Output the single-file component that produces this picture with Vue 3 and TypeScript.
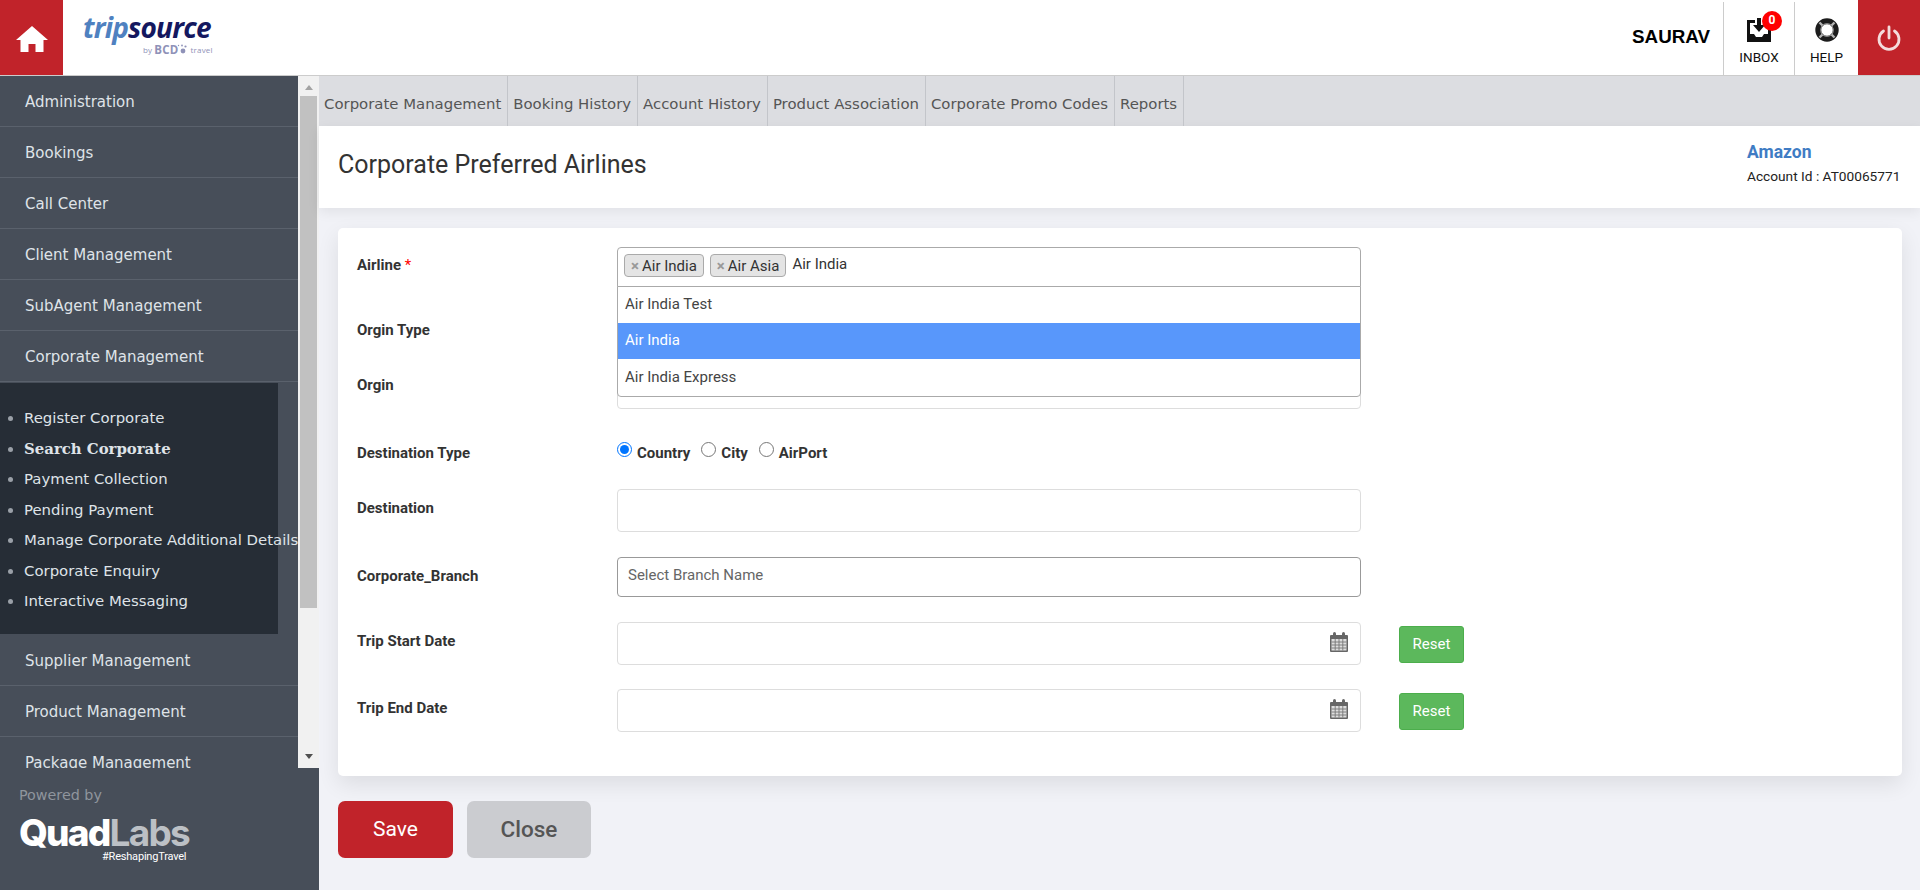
<template>
  <div class="page">
    <header class="topbar">
      <a class="home">
        <svg width="32" height="28" viewBox="0 0 32 28"><path fill="#fff" d="M16 1 0 15h4.500v12h8v-8h7v8h8V15H32z" /></svg>
      </a>
      <div class="logo">
        <div class="logo-word"><span class="trip">trip</span><span class="source">source</span></div>
        <div class="logo-by">
          by <b>BCD</b>
          <svg class="bcd-dots" width="12" height="10" viewBox="0 0 12 10" fill="#8f92b8">
            <circle cx="7" cy="7" r="2.400" />
            <circle cx="9.500" cy="2.500" r="1.100" />
            <circle cx="6" cy="1.500" r="0.900" />
            <circle cx="2.500" cy="1.500" r="0.700" />
          </svg>
          travel
        </div>
      </div>
      <div class="user">SAURAV</div>
      <a class="tool">
        <svg class="tool-icon" width="24" height="24" viewBox="0 0 24 24">
          <path fill="#111" d="M0 2h8v3H3v11h4l2 3h6l2-3h4V5h-5V2h8v22H0z" />
          <path fill="#111" d="M10 0h4v7h4l-6 7-6-7h4z" />
        </svg>
        <span class="badge">0</span>
        <span>INBOX</span>
      </a>
      <a class="tool">
        <svg class="tool-icon" width="24" height="24" viewBox="0 0 24 24">
          <circle cx="12" cy="12" r="9.200" fill="none" stroke="#1c1c1c" stroke-width="5" />
          <path stroke="#b4b4b4" stroke-width="2.400" d="m4.500 4.500 4 4M19.500 4.500l-4 4M4.500 19.500l4-4M19.500 19.500l-4-4" />
          <circle cx="12" cy="12" r="6.200" fill="#fff" stroke="#333" stroke-width="0.800" />
        </svg>
        <span>HELP</span>
      </a>
      <a class="power">
        <svg width="26" height="26" viewBox="0 0 26 26" fill="none" stroke="#f4dcdc" stroke-width="2.800" stroke-linecap="round">
          <path d="M7.500 6a10 10 0 1 0 11 0" />
          <path d="M13 2v11" />
        </svg>
      </a>
    </header>

    <div class="body">
      <aside class="sidebar">
        <div class="menu-wrap">
          <nav class="menu">
            <template v-for="item in menu" :key="item">
              <a class="menu-item">{{ item }}</a>
              <div v-if="item === 'Corporate Management'" class="submenu-wrap">
                <ul class="submenu">
                  <li v-for="s in submenu" :key="s" :class="{ current: s === 'Search Corporate' }">{{ s }}</li>
                </ul>
              </div>
            </template>
          </nav>
          <div class="scrollbar">
            <span class="arrow up"></span>
            <span class="thumb"></span>
            <span class="arrow down"></span>
          </div>
        </div>
        <div class="powered">
          <div class="powered-by">Powered by</div>
          <div class="quad"><span>Quad</span><span class="labs">Labs</span></div>
          <div class="tagline">#ReshapingTravel</div>
        </div>
      </aside>

      <main class="main">
        <div class="tabs">
          <a v-for="t in tabs" :key="t" class="tab">{{ t }}</a>
        </div>
        <div class="title-band">
          <h1>Corporate Preferred Airlines</h1>
          <div class="account">
            <a>Amazon</a>
            <span>Account Id : AT00065771</span>
          </div>
        </div>

        <section class="card">
          <div class="row r-airline">
            <label>Airline <i>*</i></label>
            <div class="multi">
              <span v-for="a in chosen" :key="a" class="chip"><em>×</em>{{ a }}</span>
              <span class="typed">Air India</span>
              <ul class="dropdown">
                <li v-for="o in options" :key="o" :class="{ active: o === 'Air India' }">{{ o }}</li>
              </ul>
            </div>
          </div>
          <div class="row r-origin-type">
            <label>Orgin Type</label>
          </div>
          <div class="row r-origin">
            <label>Orgin</label>
            <div class="field"></div>
          </div>
          <div class="row r-dest-type">
            <label>Destination Type</label>
            <div class="radios">
              <span v-for="r in radios" :key="r"><input type="radio" name="dest" :checked="r === 'Country'" />{{ r }}</span>
            </div>
          </div>
          <div class="row r-dest">
            <label>Destination</label>
            <div class="field"></div>
          </div>
          <div class="row r-branch">
            <label>Corporate_Branch</label>
            <div class="field branch">Select Branch Name</div>
          </div>
          <div v-for="d in dates" :key="d.label" class="row" :class="d.cls">
            <label>{{ d.label }}</label>
            <div class="field date">
              <svg width="18" height="20" viewBox="0 0 18 20">
                <rect x="0" y="3" width="18" height="17" rx="1" fill="#666" />
                <rect x="3" y="0" width="3" height="5" rx="1.500" fill="#666" />
                <rect x="12" y="0" width="3" height="5" rx="1.500" fill="#666" />
                <rect x="1.500" y="7" width="15" height="11.500" fill="#ddd" />
                <path stroke="#777" stroke-width="0.900" d="M5.200 7v11.500M9 7v11.500M12.800 7v11.500M1.500 10h15M1.500 13h15M1.500 16h15" />
              </svg>
            </div>
            <button class="reset">Reset</button>
          </div>
        </section>

        <div class="actions">
          <button class="save">Save</button>
          <button class="close">Close</button>
        </div>
      </main>
    </div>
  </div>
</template>

<script setup lang="ts">
const menu: string[] = [
  'Administration',
  'Bookings',
  'Call Center',
  'Client Management',
  'SubAgent Management',
  'Corporate Management',
  'Supplier Management',
  'Product Management',
  'Package Management',
]
const submenu: string[] = [
  'Register Corporate',
  'Search Corporate',
  'Payment Collection',
  'Pending Payment',
  'Manage Corporate Additional Details',
  'Corporate Enquiry',
  'Interactive Messaging',
]
const tabs: string[] = [
  'Corporate Management',
  'Booking History',
  'Account History',
  'Product Association',
  'Corporate Promo Codes',
  'Reports',
]
const chosen: string[] = ['Air India', 'Air Asia']
const options: string[] = ['Air India Test', 'Air India', 'Air India Express']
const radios: string[] = ['Country', 'City', 'AirPort']
const dates = [
  { label: 'Trip Start Date', cls: 'r-start' },
  { label: 'Trip End Date', cls: 'r-end' },
]
</script>

<style>
html,
body {
  margin: 0;
  overflow: hidden;
}
</style>

<style scoped>
.page {
  width: 1920px;
  height: 890px;
  display: flex;
  flex-direction: column;
  overflow: hidden;
  background: #f1f2f7;
  font-family: Roboto, sans-serif;
  color: #333;
}

.topbar {
  height: 75px;
  flex: none;
  display: flex;
  align-items: stretch;
  background: #fff;
  border-bottom: 1px solid #ccc;
}

.home {
  width: 63px;
  background: #c1232a;
  display: flex;
  align-items: center;
  justify-content: center;
  padding-top: 2px;
  box-sizing: border-box;
}

.logo {
  margin-left: 20px;
  padding-top: 12px;
  width: 140px;
}

.logo-word {
  font-family: "Open Sans", sans-serif;
  font-size: 28px;
  line-height: 30px;
  font-weight: 700;
  font-style: italic;
  letter-spacing: -0.8px;
}

.trip {
  color: #4f81c0;
}

.source {
  color: #14185f;
}

.logo-by {
  display: flex;
  align-items: flex-end;
  gap: 2px;
  font-family: "Open Sans", sans-serif;
  font-size: 8px;
  line-height: 10px;
  letter-spacing: 0.2px;
  color: #8f92b8;
  margin-left: 60px;
  margin-top: 2px;
}

.logo-by b {
  font-size: 11.500px;
  line-height: 11px;
}

.bcd-dots {
  margin-left: -4px;
  margin-bottom: 1px;
}

.user {
  margin-left: auto;
  margin-right: 13px;
  align-self: center;
  font-family: "Liberation Sans", sans-serif;
  font-weight: 700;
  font-size: 18.800px;
  color: #000;
  margin-top: -1px;
}

.tool {
  position: relative;
  width: 70px;
  margin-top: 2px;
  border-left: 1px solid #ccc;
  display: flex;
  flex-direction: column;
  align-items: center;
  font-size: 13.500px;
  color: #111;
}

.tool + .tool {
  width: 63px;
}

.tool-icon {
  margin-top: 16px;
  margin-bottom: 7px;
}

.badge {
  position: absolute;
  top: 9px;
  left: 38px;
  width: 20px;
  height: 20px;
  border-radius: 50%;
  background: #f00;
  color: #fff;
  font-size: 12px;
  font-weight: 700;
  line-height: 19px;
  text-align: center;
}

.power {
  width: 62px;
  background: #c1232a;
  display: flex;
  align-items: center;
  justify-content: center;
}

.body {
  flex: 1;
  display: flex;
  min-height: 0;
}

.sidebar {
  width: 319px;
  flex: none;
  display: flex;
  flex-direction: column;
  background: #474e59;
}

.menu-wrap {
  height: 692px;
  flex: none;
  display: flex;
  overflow: hidden;
}

.menu {
  width: 298px;
  flex: none;
  overflow: hidden;
  font-family: "DejaVu Sans", sans-serif;
  font-size: 15px;
  color: #dfe3e8;
}

.menu-item {
  display: block;
  height: 50px;
  line-height: 52px;
  padding-left: 25px;
  border-bottom: 1px solid #5a616c;
}

.submenu-wrap {
  height: 252px;
  padding-top: 1px;
}

.submenu {
  width: 278px;
  height: 251px;
  box-sizing: border-box;
  margin: 0;
  padding: 20px 0 0 24px;
  background: #262d36;
  list-style: disc;
  white-space: nowrap;
  font-size: 14.900px;
  line-height: 30.500px;
}

.submenu li::marker {
  color: #9aa0a8;
}

.current {
  font-family: "DejaVu Serif", serif;
  font-weight: 700;
}

.scrollbar {
  flex: 1;
  background: #f1f1f1;
  display: flex;
  flex-direction: column;
  align-items: center;
}

.arrow {
  width: 0;
  height: 0;
  border-left: 4px solid transparent;
  border-right: 4px solid transparent;
}

.arrow.up {
  margin-top: 9px;
  border-bottom: 5px solid #a3a3a3;
}

.arrow.down {
  margin-top: auto;
  margin-bottom: 9px;
  border-top: 5px solid #505050;
}

.thumb {
  width: 17px;
  height: 512px;
  margin-top: 6px;
  background: #c1c1c1;
}

.powered {
  padding: 18px 0 0 19px;
}

.powered-by {
  font-family: "DejaVu Sans", sans-serif;
  font-size: 14.300px;
  line-height: 18px;
  color: #8f959d;
}

.quad {
  margin-top: 14px;
  font-family: Inter, sans-serif;
  font-weight: 800;
  font-size: 37px;
  line-height: 30px;
  letter-spacing: -1.800px;
  color: #fff;
}

.labs {
  color: #bcc0c5;
  font-weight: 700;
}

.tagline {
  margin: 3px 0 0 83px;
  font-size: 11px;
  line-height: 12px;
  letter-spacing: -0.2px;
  color: #fff;
}

.main {
  flex: 1;
  min-width: 0;
}

.tabs {
  height: 50px;
  display: flex;
  background: #dcdde1;
  font-family: "DejaVu Sans", sans-serif;
  font-size: 14.900px;
  color: #555;
}

.tab {
  display: flex;
  align-items: center;
  padding: 5px 6px 0 5px;
  border-right: 1px solid #c3c5ca;
  white-space: nowrap;
}

.title-band {
  height: 82px;
  box-sizing: border-box;
  display: flex;
  justify-content: space-between;
  align-items: flex-start;
  padding: 0 19px;
  background: #fff;
  box-shadow: 0 4px 12px rgba(0, 0, 0, 0.07);
}

.title-band h1 {
  margin: 24px 0 0;
  font-size: 25px;
  line-height: 30px;
  font-weight: 400;
  color: #333;
}

.account {
  display: flex;
  flex-direction: column;
  padding-top: 15px;
  font-size: 13.700px;
  color: #222;
  width: 154px;
}

.account a {
  font-size: 17.500px;
  line-height: 22px;
  font-weight: 700;
  color: #3f7cc4;
  margin-bottom: 5px;
}

.card {
  height: 548px;
  box-sizing: border-box;
  margin: 20px 18px 0 19px;
  padding: 19px 19px 0;
  background: #fff;
  border-radius: 5px;
  box-shadow: 0 8px 22px rgba(0, 0, 0, 0.09);
}

.row {
  display: flex;
  align-items: flex-start;
}

.row label {
  width: 260px;
  flex: none;
  padding-top: 9px;
  font-size: 15px;
  line-height: 20px;
  font-weight: 700;
  color: #333;
}

.row label i {
  color: #f00;
  font-style: normal;
  font-weight: 400;
}

.r-airline {
  height: 71px;
}

.r-airline label {
  padding-top: 8px;
}

.r-origin-type {
  height: 48px;
}

.r-origin {
  height: 74px;
}

.r-dest-type {
  height: 49px;
}

.r-dest {
  height: 68px;
}

.r-branch {
  height: 65px;
}

.r-start {
  height: 67px;
}

.r-origin-type label {
  padding-top: 2px;
}

.r-dest-type label {
  padding-top: 3px;
}

.multi {
  position: relative;
  width: 744px;
  height: 40px;
  box-sizing: border-box;
  display: flex;
  align-items: flex-start;
  gap: 6px;
  padding: 6px 6px 0;
  background: #fff;
  border: 1px solid #aaa;
  border-radius: 4px 4px 0 0;
  font-size: 15px;
}

.chip {
  height: 23px;
  box-sizing: border-box;
  display: inline-flex;
  align-items: center;
  padding: 0 6px;
  border: 1px solid #aaa;
  border-radius: 4px;
  background: #e4e4e4;
}

.chip em {
  font-style: normal;
  font-weight: 700;
  color: #999;
  margin-right: 3px;
}

.typed {
  line-height: 21px;
}

.dropdown {
  position: absolute;
  z-index: 2;
  top: 38px;
  left: -1px;
  width: 744px;
  box-sizing: border-box;
  margin: 0;
  padding: 0;
  list-style: none;
  background: #fff;
  border: 1px solid #aaa;
  border-radius: 0 0 4px 4px;
}

.dropdown li {
  height: 36px;
  line-height: 34px;
  padding-left: 7px;
  color: #444;
}

.dropdown li:last-child {
  height: 37px;
  line-height: 36px;
}

.dropdown li.active {
  background: #5897fb;
  color: #fff;
}

.radios {
  display: flex;
  gap: 11px;
  padding-top: 1px;
  font-size: 15px;
  line-height: 24px;
  font-weight: 700;
  color: #333;
}

.radios span {
  display: flex;
  align-items: center;
}

.radios input {
  width: 15px;
  height: 15px;
  margin: -7px 5px 0 0;
}

.field {
  width: 744px;
  height: 43px;
  box-sizing: border-box;
  border: 1px solid #ddd;
  border-radius: 4px;
  background: #fff;
}

.field.branch {
  height: 40px;
  padding-left: 10px;
  border-color: #999;
  font-size: 15px;
  line-height: 34px;
  color: #666;
}

.field.date {
  display: flex;
  align-items: center;
  justify-content: flex-end;
  padding-right: 12px;
}

.field.date svg {
  margin-bottom: 3px;
}

.reset {
  width: 65px;
  height: 37px;
  margin: 4px 0 0 38px;
  padding: 0 0 2px;
  border: 1px solid #4cae4c;
  border-radius: 3px;
  background: #5cb85c;
  color: #fff;
  font-family: Roboto, sans-serif;
  font-size: 15px;
}

.actions {
  display: flex;
  gap: 14px;
  margin: 25px 0 0 19px;
}

.actions button {
  height: 57px;
  padding: 0 0 2px;
  border: 0;
  border-radius: 7px;
  font-family: Roboto, sans-serif;
  font-size: 21px;
}

.save {
  width: 115px;
  background: #c1232a;
  color: #fff;
}

.actions .close {
  width: 124px;
  background: #cbccd0;
  color: #555;
  font-weight: 500;
  font-size: 22.500px;
}
</style>
